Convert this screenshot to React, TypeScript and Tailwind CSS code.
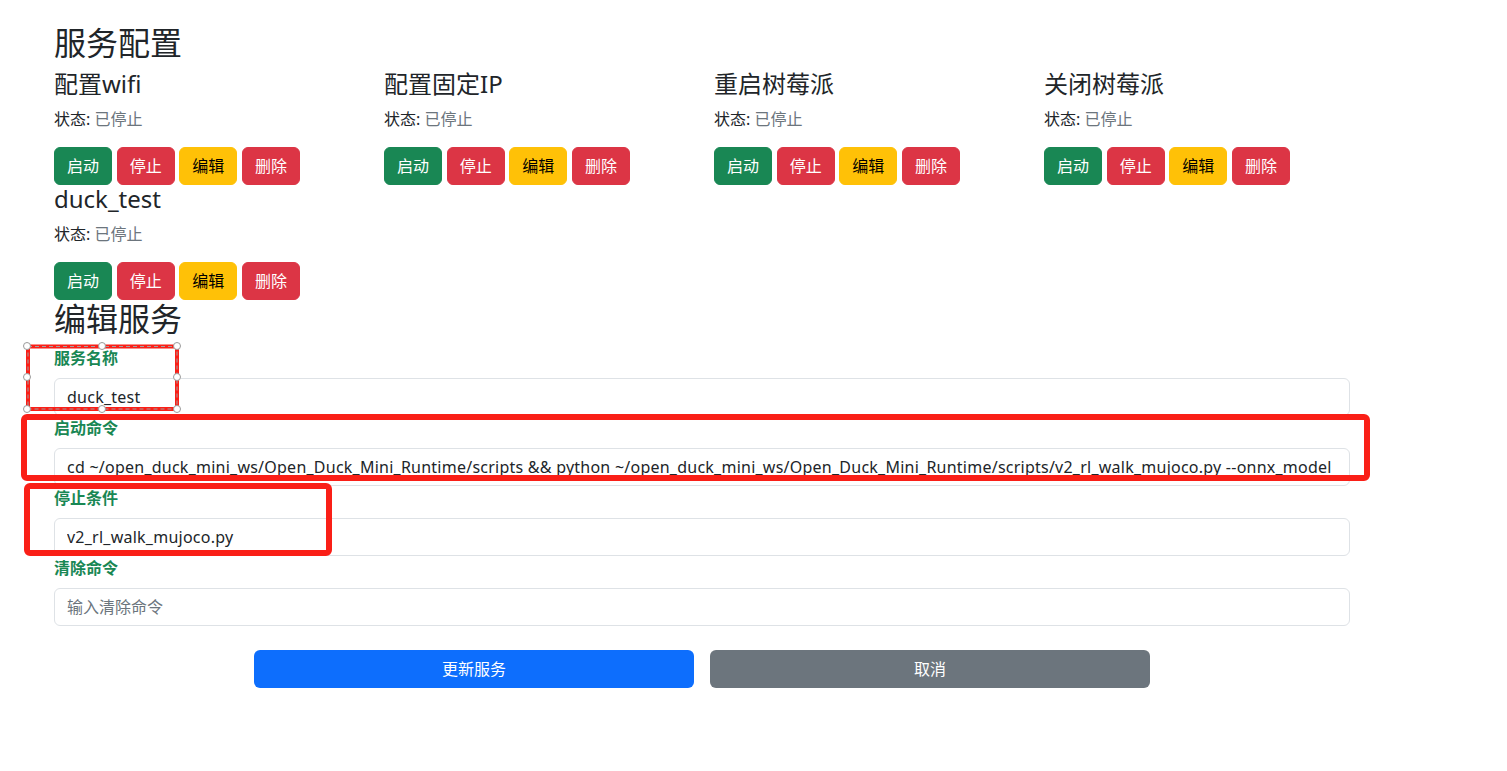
import React from "react";

const services = ["配置wifi", "配置固定IP", "重启树莓派", "关闭树莓派", "duck_test"];

function ServiceCard({ name }: { name: string }) {
  return (
    <div className="px-3">
      <h4 className="text-[24px] leading-[1.2] font-normal mb-2 text-[#212529]">{name}</h4>
      <p className="text-[16px] leading-[1.5] mb-4 text-[#212529]">
        状态: <span className="text-[#6c757d]">已停止</span>
      </p>
      <div className="flex gap-[4.67px]">
        <button className="h-[38px] px-3 rounded-[6px] bg-[#198754] text-white text-[16px] leading-[1.5] border border-[#198754]">启动</button>
        <button className="h-[38px] px-3 rounded-[6px] bg-[#dc3545] text-white text-[16px] leading-[1.5] border border-[#dc3545]">停止</button>
        <button className="h-[38px] px-3 rounded-[6px] bg-[#ffc107] text-black text-[16px] leading-[1.5] border border-[#ffc107]">编辑</button>
        <button className="h-[38px] px-3 rounded-[6px] bg-[#dc3545] text-white text-[16px] leading-[1.5] border border-[#dc3545]">删除</button>
      </div>
    </div>
  );
}

function Field({ label, value, placeholder }: { label: string; value?: string; placeholder?: string }) {
  return (
    <div>
      <label className="block text-[16px] leading-[1.5] font-bold text-[#198754] mb-2">{label}</label>
      <input
        readOnly
        value={value ?? ""}
        placeholder={placeholder}
        className="block w-full h-[38px] px-3 py-[6px] text-[16px] leading-[1.5] tracking-[0.24px] text-[#212529] bg-white border border-[#dee2e6] rounded-[6px] outline-none placeholder:text-[#6c757d] placeholder:tracking-normal"
      />
    </div>
  );
}

export default function App() {
  const handles: [number, number][] = [
    [27, 346], [102, 346], [177, 346],
    [27, 377], [177, 377],
    [27, 409], [102, 409], [177, 409],
  ];
  return (
    <div
      className="relative min-h-[771px] bg-white text-[#212529]"
      style={{ fontFamily: '"Noto Sans", "Noto Sans CJK SC", sans-serif' }}
    >
      <div className="pt-6 pl-[54px] w-[1350px]">
        <h2 className="text-[32px] leading-[1.2] font-normal mb-2">服务配置</h2>
        <div className="grid grid-cols-4 w-[1320px] -ml-3">
          {services.map((s) => (
            <ServiceCard key={s} name={s} />
          ))}
        </div>
        <h2 className="text-[32px] leading-[1.2] font-normal mb-2">编辑服务</h2>
        <div className="flex flex-col">
          <Field label="服务名称" value="duck_test" />
          <Field
            label="启动命令"
            value="cd ~/open_duck_mini_ws/Open_Duck_Mini_Runtime/scripts && python ~/open_duck_mini_ws/Open_Duck_Mini_Runtime/scripts/v2_rl_walk_mujoco.py --onnx_model"
          />
          <Field label="停止条件" value="v2_rl_walk_mujoco.py" />
          <Field label="清除命令" placeholder="输入清除命令" />
        </div>
        <div className="flex justify-center gap-4 mt-6">
          <button className="w-[440px] h-[38px] rounded-[6px] bg-[#0d6efd] text-white text-[16px] leading-[1.5]">更新服务</button>
          <button className="w-[440px] h-[38px] rounded-[6px] bg-[#6c757d] text-white text-[16px] leading-[1.5]">取消</button>
        </div>
      </div>

      <svg className="absolute left-0 top-0 pointer-events-none" width="1507" height="771">
        <rect x="28" y="346.5" width="149" height="62.5" fill="none" stroke="#fa1f17" strokeWidth="4" />
        <rect x="28" y="346.5" width="149" height="62.5" fill="none" stroke="#a0a0a0" strokeWidth="1" strokeDasharray="4 3" />
        {handles.map(([x, y], i) => (
          <circle key={i} cx={x} cy={y} r="3.5" fill="#ffffff" stroke="#9a9a9a" strokeWidth="1" />
        ))}
        <rect x="24" y="417" width="1343" height="61" rx="3" fill="none" stroke="#fa1f17" strokeWidth="6" />
        <rect x="27" y="486" width="302" height="67" rx="3" fill="none" stroke="#fa1f17" strokeWidth="6" />
      </svg>
    </div>
  );
}
